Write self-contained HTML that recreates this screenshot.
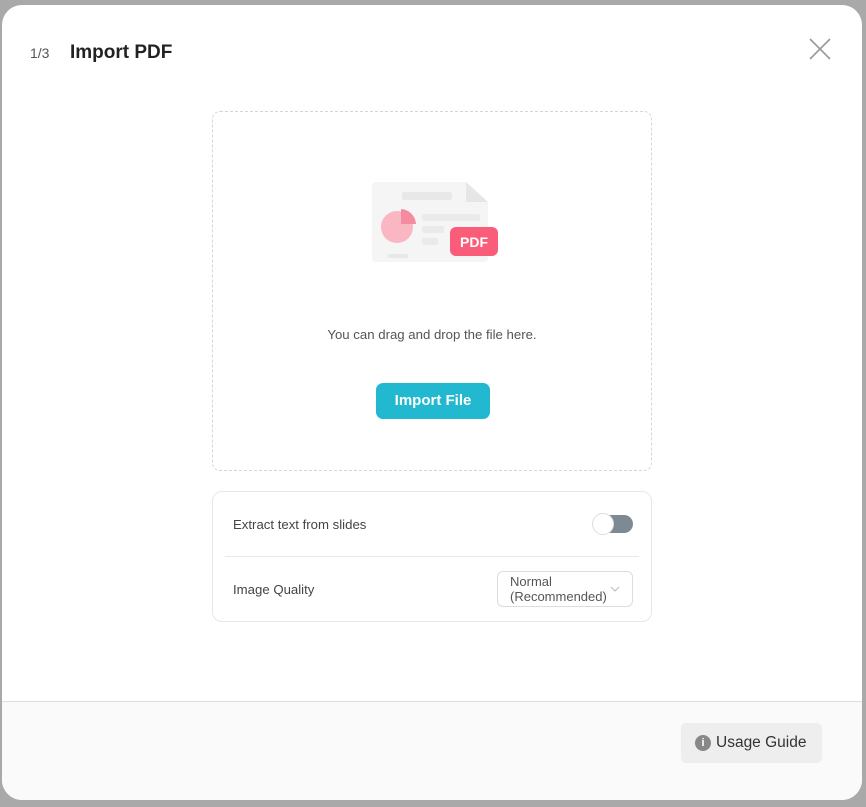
<!DOCTYPE html>
<html><head><style>
*{margin:0;padding:0;box-sizing:border-box}
body{width:866px;height:807px;background:#a9a9a9;font-family:"Liberation Sans",sans-serif;position:relative;overflow:hidden}
.modal{position:absolute;left:2px;top:5px;width:860px;height:795px;background:#fff;border-radius:20px;overflow:hidden}
.step{position:absolute;left:28px;top:40px;font-size:14px;color:#555}
.title{position:absolute;left:68px;top:37px;font-size:19px;font-weight:bold;color:#222}
.drop{position:absolute;left:210px;top:106px;width:440px;height:360px;border:1px dashed #d6d6d6;border-radius:8px}
.hint{position:absolute;left:0;right:0;top:215px;text-align:center;font-size:13.2px;color:#555}
.btn{position:absolute;left:163px;top:271px;width:114px;height:36px;background:#22b8d0;border-radius:7px;color:#fff;font-weight:bold;font-size:15px;text-align:center;line-height:36px}
.opts{position:absolute;left:210px;top:486px;width:440px;height:131px;border:1px solid #e6e6e6;border-radius:10px}
.lbl{position:absolute;left:20px;font-size:13.2px;color:#444}
.sep{position:absolute;left:12px;right:12px;top:64px;border-top:1px solid #e8e8e8}
.tog{position:absolute;left:380px;top:23px;width:40px;height:18px;background:#7d8a94;border-radius:9px}
.tog i{position:absolute;left:-1px;top:-2px;width:22px;height:22px;background:#fff;border:1px solid #ddd;border-radius:50%}
.sel{position:absolute;left:284px;top:79px;width:136px;height:36px;border:1px solid #ddd;border-radius:6px;font-size:13px;color:#555;padding:2px 0 0 12px;line-height:15px}
.foot{position:absolute;left:0;right:0;top:696px;bottom:0;background:#fafafa;border-top:1px solid #ddd}
.guide{position:absolute;left:679px;top:21px;width:141px;height:40px;background:#eee;border-radius:5px;font-size:15.5px;color:#333;line-height:40px;padding-left:35px}
.guide b{position:absolute;left:14px;top:12px;width:16px;height:16px;border-radius:50%;background:#888;color:#fff;font-size:11px;line-height:16px;text-align:center}
</style></head><body>
<div class="modal">
<div class="step">1/3</div>
<div class="title">Import PDF</div>
<svg style="position:absolute;left:807px;top:33px" width="22" height="22"><path d="M1 1L21 21M21 1L1 21" stroke="#999" stroke-width="1.6"/></svg>
<div class="drop">
<svg style="position:absolute;left:155px;top:70px" width="130" height="85">
<path d="M8 0H98L120 20V76Q120 80 116 80H8Q4 80 4 76V4Q4 0 8 0Z" fill="#f5f5f5"/>
<path d="M98 0V20H120Z" fill="#e6e6e6"/>
<rect x="34" y="10" width="50" height="8" rx="2" fill="#e8e8e8"/>
<rect x="54" y="32" width="58" height="7" rx="2" fill="#eaeaea"/>
<rect x="54" y="44" width="22" height="7" rx="2" fill="#eaeaea"/>
<rect x="54" y="56" width="16" height="7" rx="2" fill="#eaeaea"/>
<rect x="20" y="72" width="20" height="4" rx="2" fill="#e8e8e8"/>
<circle cx="29" cy="45" r="16" fill="#fab6c2"/>
<path d="M33 27A16 16 0 0 1 48 42H33Z" fill="#f58aa0"/>
<rect x="82" y="45" width="48" height="29" rx="6" fill="#fa5d7a"/>
<text x="106" y="65" font-size="14" font-weight="bold" fill="#fff" text-anchor="middle" font-family="Liberation Sans">PDF</text>
</svg>
<div class="hint">You can drag and drop the file here.</div>
<div class="btn">Import File</div>
</div>
<div class="opts">
<div class="lbl" style="top:25px">Extract text from slides</div>
<div class="tog"><i></i></div>
<div class="sep"></div>
<div class="lbl" style="top:90px">Image Quality</div>
<div class="sel">Normal<br>(Recommended)<svg style="position:absolute;right:12px;top:14px" width="10" height="6"><path d="M1 1L5 5L9 1" stroke="#bbb" fill="none"/></svg></div>
</div>
<div class="foot"><div class="guide"><b>i</b>Usage Guide</div></div>
</div>
</body></html>
